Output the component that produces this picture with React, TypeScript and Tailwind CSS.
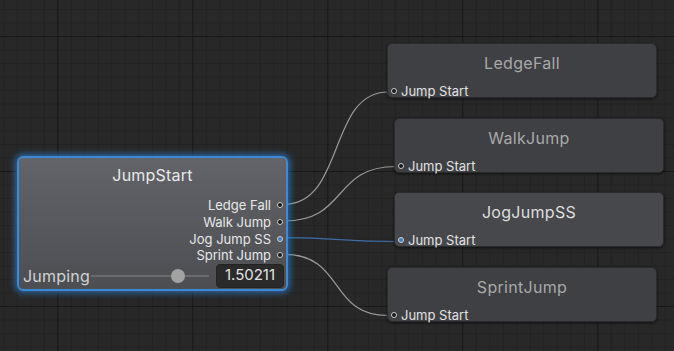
import React from "react";

const font = { fontFamily: "Inter, 'Noto Sans', sans-serif" };

function Dot({ blue = false }: { blue?: boolean }) {
  return (
    <span
      className={`inline-block w-[6px] h-[6px] rounded-full border border-[#cfcfcf] ${blue ? "bg-[#3f7fc4]" : "bg-[#161616]"}`}
    />
  );
}

function TargetNode({
  title,
  x,
  y,
  active = false,
}: {
  title: string;
  x: number;
  y: number;
  active?: boolean;
}) {
  return (
    <div
      className={`absolute w-[270px] h-[55px] rounded-[5px] border border-[#2a2b2e] shadow-[0_1px_3px_rgba(0,0,0,0.6)] flex flex-col ${active ? "bg-[#46484c]" : "bg-[#3e4044]"}`}
      style={{ left: x, top: y }}
    >
      <div
        className={`h-[41px] pt-[7.5px] text-center text-[16px] leading-[22px] tracking-[0.3px] ${active ? "text-[#dedede]" : "text-[#a9a9a9]"}`}
      >
        {title}
      </div>
      <div className="flex items-center h-[12px] pl-[3px] gap-[4px]">
        <Dot blue={active} />
        <span className="text-[13px] leading-[12px] text-[#e2e2e2]">Jump Start</span>
      </div>
    </div>
  );
}

export default function App() {
  const ports = [
    { label: "Ledge Fall", blue: false },
    { label: "Walk Jump", blue: false },
    { label: "Jog Jump SS", blue: true },
    { label: "Sprint Jump", blue: false },
  ];
  return (
    <div className="relative w-[674px] h-[351px] overflow-hidden bg-[#282828]" style={font}>
      <svg className="absolute inset-0" width="674" height="351">
        <defs>
          <pattern id="minor" x="3.3" y="9" width="13.5" height="13.5" patternUnits="userSpaceOnUse">
            <path d="M0 0.5 H13.5 M0.5 0 V13.5" stroke="#222222" strokeWidth="1" fill="none" />
          </pattern>
          <pattern id="major" x="57.3" y="36" width="135" height="135" patternUnits="userSpaceOnUse">
            <path d="M0 0.5 H135 M0.5 0 V135" stroke="#191919" strokeWidth="1" fill="none" />
          </pattern>
        </defs>
        <rect width="674" height="351" fill="url(#minor)" />
        <rect width="674" height="351" fill="url(#major)" />
        <g fill="none" strokeWidth="1.2">
          <path d="M284 204.3 C 345 204.3, 328 92, 388 92" stroke="#9a9a9a" />
          <path d="M284 221 C 348 221, 332 166.5, 396 166.5" stroke="#9a9a9a" />
          <path d="M284 237.7 C 340 237.7, 340 241.5, 396 241.5" stroke="#3b6ea8" />
          <path d="M284 254.3 C 345 254.3, 328 315.5, 388 315.5" stroke="#9a9a9a" />
        </g>
      </svg>

      <div className="absolute left-[17px] top-[156px] w-[271px] h-[135px] rounded-[6px] border-2 border-[#3b8ad6] shadow-[0_0_6px_2px_rgba(50,130,215,0.7)] bg-linear-to-b from-[#626469] to-[#4c4e52] flex flex-col">
        <div className="pt-[5.5px] h-[39px] text-center text-[16px] leading-[22px] tracking-[0.2px] text-[#e8e8e8]">JumpStart</div>
        <div className="flex flex-col items-end pr-[3px]">
          {ports.map((p) => (
            <div key={p.label} className="flex items-center h-[16.67px] gap-[6px]">
              <span className="text-[13px] leading-[16px] text-[#e8e8e8]">{p.label}</span>
              <Dot blue={p.blue} />
            </div>
          ))}
        </div>
        <div className="flex items-center h-[24px] pl-[4px] pr-[2px]">
          <span className="w-[67px] text-[16px] leading-[20px] tracking-[0.2px] text-[#d2d2d2]">Jumping</span>
          <div className="relative w-[118px] h-[2px] bg-[#696b6f] ml-[1px]">
            <span className="absolute left-[80px] top-[-6px] w-[14px] h-[14px] rounded-full bg-[#a3a3a3]" />
          </div>
          <div className="ml-auto w-[68px] h-[24px] rounded-[4px] bg-[#2a2a2b] border border-[#232323] flex items-center justify-center text-[15px] text-[#e2e2e2]">
            1.50211
          </div>
        </div>
      </div>

      <TargetNode title="LedgeFall" x={387} y={43} />
      <TargetNode title="WalkJump" x={394} y={118} />
      <TargetNode title="JogJumpSS" x={394} y={192} active />
      <TargetNode title="SprintJump" x={387} y={267} />
    </div>
  );
}
